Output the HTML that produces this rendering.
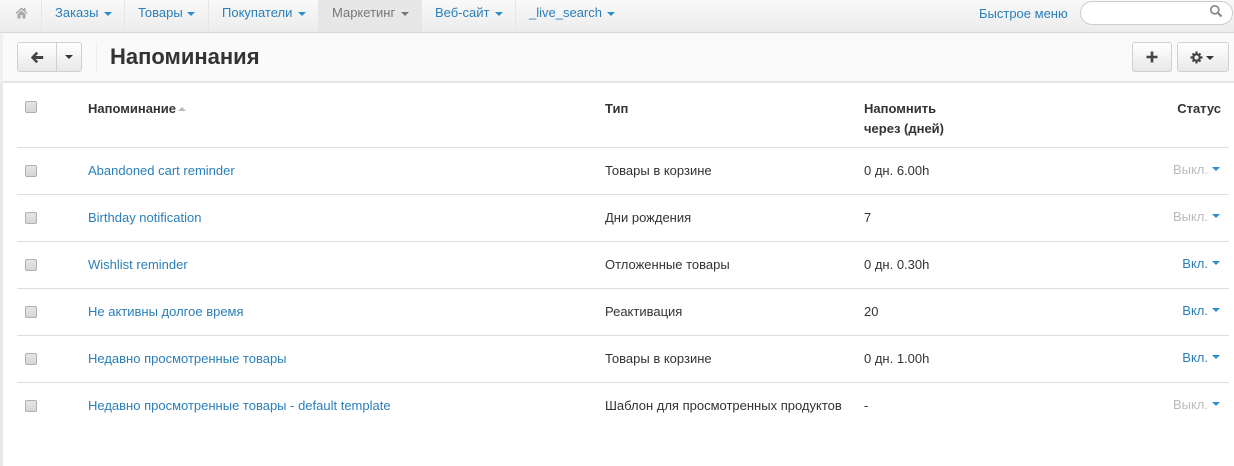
<!DOCTYPE html>
<html><head><meta charset="utf-8"><style>
html,body{margin:0;padding:0;width:1234px;height:466px;overflow:hidden;background:#fff;font-family:"Liberation Sans",sans-serif;font-size:13px;color:#333}
.a{position:absolute;white-space:nowrap;line-height:16px}
#nav{position:absolute;left:0;top:0;width:1234px;height:32px;background:linear-gradient(#f9f9f9,#ececec);border-bottom:1px solid #d8d8d8}
.sep{position:absolute;top:0;width:1px;height:32px;background:#e6e6e6}
.n{color:#2a7fba;top:5px}
.car{position:absolute;width:0;height:0;border-left:4px solid transparent;border-right:4px solid transparent;border-top:4px solid #2a8fc9}
#hdr{position:absolute;left:0;top:33px;width:1234px;height:48px;background:#fafafa;border-bottom:2px solid #e4e4e4}
.btn{position:absolute;box-sizing:border-box;height:30px;top:42px;border:1px solid #d0d0d0;border-radius:3px;background:linear-gradient(#fff,#e8e8e8)}
.line{position:absolute;left:17px;width:1212px;height:1px;background:#ddd}
.cb{position:absolute;left:25px;width:12px;height:12px;box-sizing:border-box;border:1px solid #b0b0b0;border-radius:2px;background:linear-gradient(#e6e6e6,#d6d6d6)}
.l{color:#2a7fba;left:88px}
.t{left:605px}.d{left:864px}
.s{right:26px;color:#bbb}
.on{color:#2a7fba}
.th{font-weight:bold}
</style></head><body>
<div id="nav"></div>
<div style="position:absolute;left:318px;top:0;width:103px;height:32px;background:#e7e7e7"></div>
<div class="sep" style="left:41px"></div><div class="sep" style="left:124px"></div><div class="sep" style="left:208px"></div><div class="sep" style="left:318px"></div><div class="sep" style="left:421px"></div><div class="sep" style="left:515px"></div>
<svg style="position:absolute;left:15px;top:7px" width="13" height="12" viewBox="0 0 13 12"><path d="M6.5 0.5L0.5 6l1 1 5-4.5 5 4.5 1-1-2-1.8V1H9v1.2z M2.5 7.2V11.5H5.5V8h2v3.5h3V7.2L6.5 3.6z" fill="#a8a8a8"/></svg>
<div class="a n" style="left:55px">Заказы</div><div class="car" style="left:104px;top:12px"></div>
<div class="a n" style="left:138px">Товары</div><div class="car" style="left:187px;top:12px"></div>
<div class="a n" style="left:222px">Покупатели</div><div class="car" style="left:298px;top:12px"></div>
<div class="a" style="left:332px;top:5px;color:#777">Маркетинг</div><div class="car" style="left:401px;top:12px;border-top-color:#777"></div>
<div class="a n" style="left:435px">Веб-сайт</div><div class="car" style="left:495px;top:12px"></div>
<div class="a n" style="left:529px">_live_search</div><div class="car" style="left:607px;top:12px"></div>
<div class="a n" style="left:979px;top:6px">Быстрое меню</div>
<div style="position:absolute;left:1080px;top:1px;width:151px;height:22px;background:#fff;border:1px solid #ccc;border-radius:12px"></div>
<svg style="position:absolute;left:1209px;top:4px" width="14" height="14" viewBox="0 0 14 14" fill="none" stroke="#888" stroke-width="1.7"><circle cx="5.8" cy="5.8" r="4"/><path d="M8.8 8.8L12.5 12.5" stroke-width="2.2"/></svg>
<div id="hdr"></div>
<div style="position:absolute;left:0;top:33px;width:3px;height:433px;background:linear-gradient(#f0f0f0 0,#f0f0f0 50px,#e8e8e8 50px)"></div>
<div class="btn" style="left:17px;width:40px;border-radius:3px 0 0 3px"></div>
<div class="btn" style="left:56px;width:26px;border-radius:0 3px 3px 0"></div>
<svg style="position:absolute;left:30px;top:51px" width="14" height="13" viewBox="0 0 14 13"><path d="M0.8 6.5L6.3 0.8 8.2 2.7 5.6 5H13.2V8H5.6L8.2 10.3 6.3 12.2z" fill="#444"/></svg>
<div class="car" style="left:65px;top:55px;border-top-color:#333"></div>
<div style="position:absolute;left:96px;top:42px;width:1px;height:30px;background:#eee"></div>
<div class="a" style="left:110px;top:44px;font-size:22px;line-height:26px;font-weight:bold;color:#333">Напоминания</div>
<div class="btn" style="left:1132px;width:40px"></div>
<svg style="position:absolute;left:1146px;top:51px" width="12" height="12" viewBox="0 0 12 12"><path d="M4.7 0.5H7.3V4.7H11.5V7.3H7.3V11.5H4.7V7.3H0.5V4.7H4.7z" fill="#444"/></svg>
<div class="btn" style="left:1177px;width:52px"></div>
<svg style="position:absolute;left:1190px;top:51px" width="13" height="13" viewBox="0 0 13 13"><circle cx="6.5" cy="6.5" r="3.2" fill="none" stroke="#444" stroke-width="2.2"/><path d="M5.4 0.5H7.6V3H5.4zM5.4 10H7.6V12.5H5.4zM0.5 5.4H3V7.6H0.5zM10 5.4H12.5V7.6H10zM1.8 3.3L3.3 1.8 4.8 3.3 3.3 4.8zM9.7 1.8L11.2 3.3 9.7 4.8 8.2 3.3zM1.8 9.7L3.3 8.2 4.8 9.7 3.3 11.2zM9.7 8.2L11.2 9.7 9.7 11.2 8.2 9.7z" fill="#444"/></svg>
<div class="car" style="left:1206px;top:56px;border-top-color:#333"></div>

<div class="cb" style="top:101px"></div>
<div class="a th" style="left:88px;top:101px">Напоминание</div>
<div class="car" style="left:178px;top:107px;border-top:0;border-bottom:4px solid #bbb"></div>
<div class="a th" style="left:605px;top:101px">Тип</div>
<div class="a th" style="left:864px;top:101px">Напомнить</div>
<div class="a th" style="left:864px;top:121px">через (дней)</div>
<div class="a th" style="right:13px;top:101px">Статус</div>

<div class="line" style="top:147px"></div>
<div class="cb" style="top:165px"></div><div class="a l" style="top:163px">Abandoned cart reminder</div><div class="a t" style="top:163px">Товары в корзине</div><div class="a d" style="top:163px">0 дн. 6.00h</div><div class="a s" style="top:162px">Выкл.</div><div class="car" style="left:1212px;top:167px"></div>
<div class="line" style="top:194px"></div>
<div class="cb" style="top:212px"></div><div class="a l" style="top:210px">Birthday notification</div><div class="a t" style="top:210px">Дни рождения</div><div class="a d" style="top:210px">7</div><div class="a s" style="top:209px">Выкл.</div><div class="car" style="left:1212px;top:214px"></div>
<div class="line" style="top:241px"></div>
<div class="cb" style="top:259px"></div><div class="a l" style="top:257px">Wishlist reminder</div><div class="a t" style="top:257px">Отложенные товары</div><div class="a d" style="top:257px">0 дн. 0.30h</div><div class="a s on" style="top:256px">Вкл.</div><div class="car" style="left:1212px;top:261px"></div>
<div class="line" style="top:288px"></div>
<div class="cb" style="top:306px"></div><div class="a l" style="top:304px">Не активны долгое время</div><div class="a t" style="top:304px">Реактивация</div><div class="a d" style="top:304px">20</div><div class="a s on" style="top:303px">Вкл.</div><div class="car" style="left:1212px;top:308px"></div>
<div class="line" style="top:335px"></div>
<div class="cb" style="top:353px"></div><div class="a l" style="top:351px">Недавно просмотренные товары</div><div class="a t" style="top:351px">Товары в корзине</div><div class="a d" style="top:351px">0 дн. 1.00h</div><div class="a s on" style="top:350px">Вкл.</div><div class="car" style="left:1212px;top:355px"></div>
<div class="line" style="top:382px"></div>
<div class="cb" style="top:400px"></div><div class="a l" style="top:398px">Недавно просмотренные товары - default template</div><div class="a t" style="top:398px">Шаблон для просмотренных продуктов</div><div class="a d" style="top:398px">-</div><div class="a s" style="top:397px">Выкл.</div><div class="car" style="left:1212px;top:402px"></div>
</body></html>
